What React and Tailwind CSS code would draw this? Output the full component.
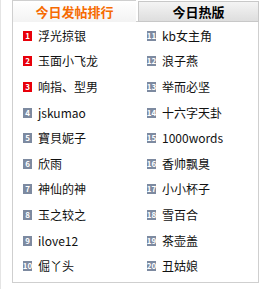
const LEFT = ['浮光掠银', '玉面小飞龙', '响指、型男', 'jskumao', '寶貝妮子', '欣雨', '神仙的神', '玉之较之', 'ilove12', '倔丫头']
const RIGHT = ['kb女主角', '浪子燕', '举而必坚', '十六字天卦', '1000words', '香帅飘臭', '小小杯子', '雪百合', '茶壶盖', '丑姑娘']

function Item({ n, name }) {
  return (
    <li className="flex items-center h-[25.6px]">
      <span
        className={`w-[9px] h-[10px] mr-[6px] flex items-center justify-center text-[8px] leading-none text-white font-bold ${
          n <= 3 ? 'bg-[#e8000a]' : 'bg-[#7d8aa0]'
        }`}
      >
        {n}
      </span>
      <span className="text-[12px] text-[#111]">{name}</span>
    </li>
  )
}

export default function App() {
  return (
    <div
      className="w-[264px] h-[289px] bg-white pl-[11px] pr-[5px] border-l border-[#e4e4e4]"
      style={{ fontFamily: '"Noto Sans CJK SC", "Noto Sans", sans-serif' }}
    >
      <div className="flex h-[22px]">
        <div className="w-[124px] border-l border-t border-[#cfcfcf] bg-gradient-to-b from-white to-[#f3f3f3] flex items-center justify-center text-[13px] font-bold text-[#f66a00]">
          今日发帖排行
        </div>
        <div className="w-[2px] border-b border-[#cfcfcf]" />
        <div className="flex-1 mt-[1px] border border-[#c8c8c8] bg-gradient-to-b from-[#f4f4f4] to-[#dedede] flex items-center justify-center text-[13px] font-bold text-black">
          今日热版
        </div>
      </div>
      <div className="h-[261px] border-l border-r border-b border-[#cfcfcf] bg-white flex pt-[1px]">
        <ul className="w-[124px] pl-[10px]">
          {LEFT.map((name, i) => (
            <Item key={name} n={i + 1} name={name} />
          ))}
        </ul>
        <ul className="flex-1 pl-[10px]">
          {RIGHT.map((name, i) => (
            <Item key={name} n={i + 11} name={name} />
          ))}
        </ul>
      </div>
    </div>
  )
}
